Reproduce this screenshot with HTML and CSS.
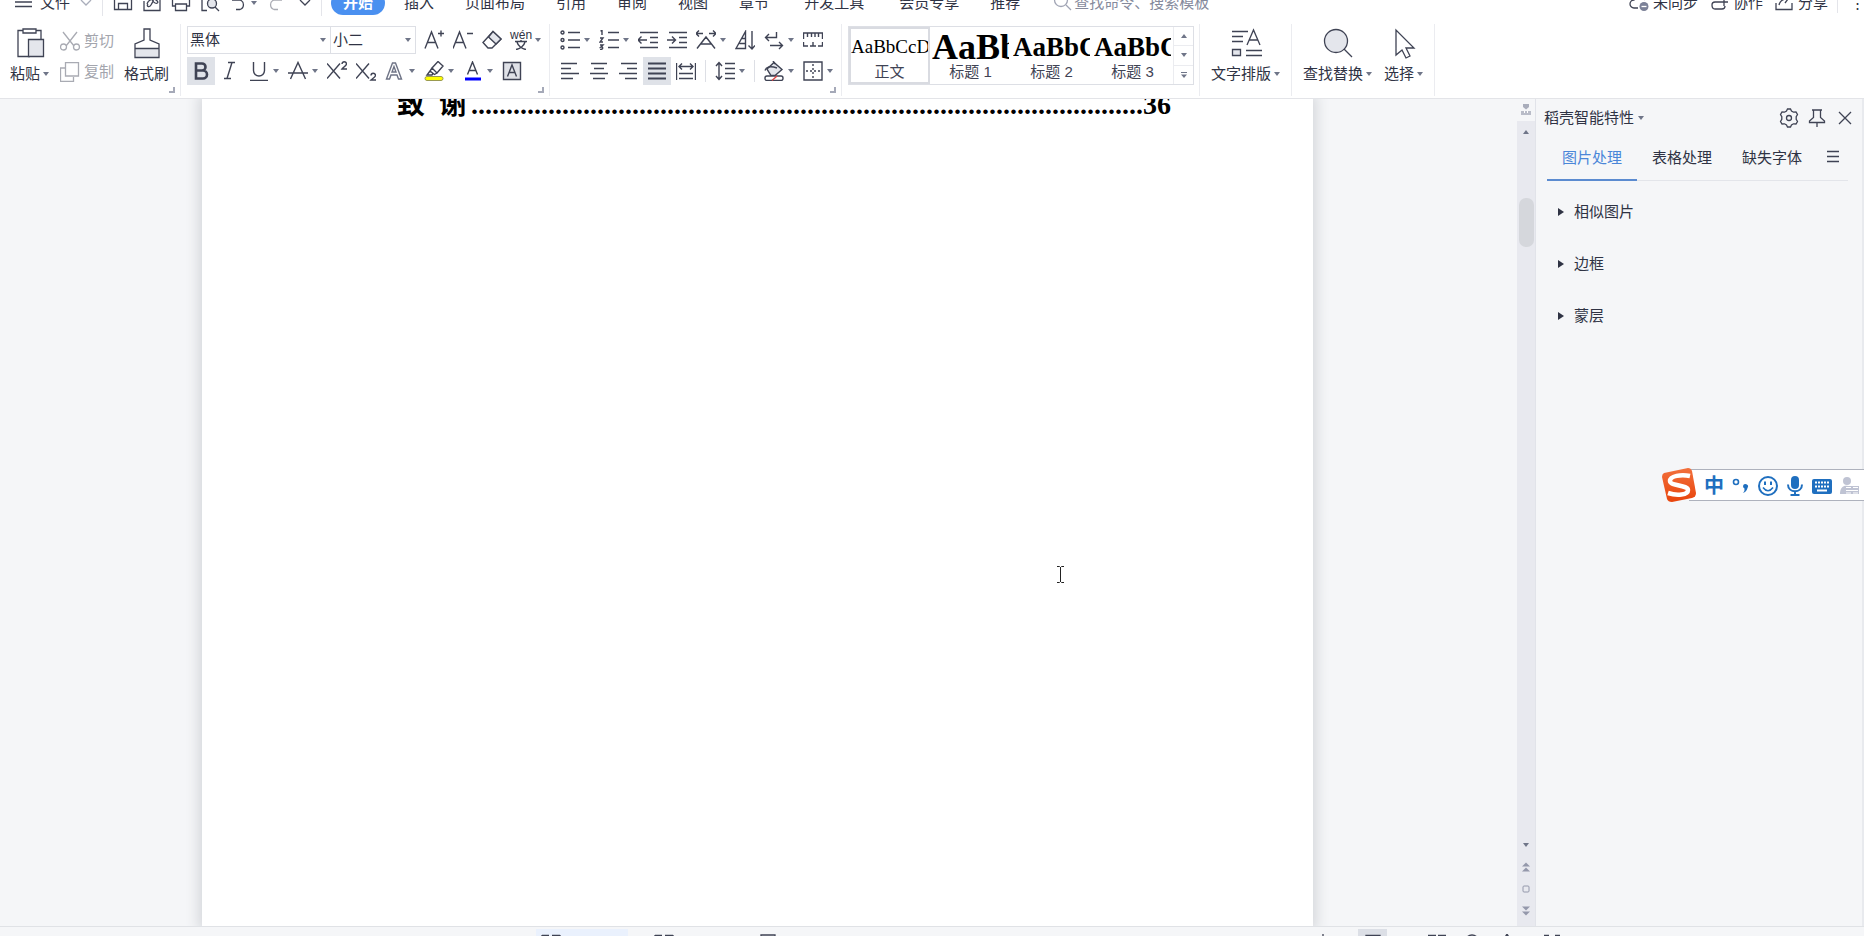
FILE: index.html
```html
<!DOCTYPE html>
<html lang="zh-CN">
<head>
    <meta charset="UTF-8">
    <meta name="viewport" content="width=device-width, initial-scale=1.0">
    <title>文字文稿</title>
    <link rel="stylesheet" href="styles.css">
</head>
<body>

    <!-- Shared glyphs -->
    <svg class="sprite" aria-hidden="true">
        <symbol id="caret" viewBox="0 0 6 4"><path d="M0 0h6L3 4z" fill="#6f7588"/></symbol>
        <symbol id="corner" viewBox="0 0 6 6"><path d="M5 0v5H0" fill="none" stroke="#a5a9b8" stroke-width="2"/></symbol>
        <symbol id="chevron" viewBox="0 0 12 8"><path d="M1 1l5 5 5-5" fill="none" stroke="currentColor" stroke-width="1.3"/></symbol>
    </svg>

    <div class="app">

        <!-- Menu bar -->
        <header class="menubar">
            <div class="menu-file">
                <button class="file-button">
                    <svg class="icon" viewBox="0 0 20 20"><path d="M1 5h17M1 9h17M1 13.500h17"/></svg>
                    <span>文件</span>
                    <svg class="chevron light"><use href="#chevron"/></svg>
                </button>
            </div>
            <div class="quick-tools">
                <button aria-label="保存"><svg class="icon" viewBox="0 0 20 20"><path d="M1.500 2h17v14.500h-17zM5.500 16.500v-6h9v6"/></svg></button>
                <button aria-label="输出为PDF"><svg class="icon" viewBox="0 0 20 20"><path d="M2 8v9.500h16V4M6 11c-2 2 1 4 3 1s4-9 2-9-1 6 2 7 4-1 1-3-8 0-9 4"/></svg></button>
                <button aria-label="打印"><svg class="icon" viewBox="0 0 20 20"><path d="M4 13H1.500V6h17v7H16M4.500 11h11v6.500h-11z"/></svg></button>
                <button aria-label="打印预览"><svg class="icon" viewBox="0 0 20 20"><path d="M7 17.500H2V2h14v5"/><circle cx="12" cy="10.500" r="4.500" fill="#e4e6ec"/><path d="M15 14l4 4"/></svg></button>
                <button aria-label="撤销" class="undo"><svg class="icon" viewBox="0 0 20 20"><path d="M3 7h8a5 5 0 0 1 0 9.500H7"/></svg><svg class="caret"><use href="#caret"/></svg></button>
                <button aria-label="恢复" class="disabled"><svg class="icon" viewBox="0 0 20 20"><path d="M16 7H8a5 5 0 0 0 0 9.500h4"/></svg></button>
                <button aria-label="自定义"><svg class="chevron"><use href="#chevron"/></svg></button>
            </div>
            <nav class="tabs">
                <button class="tab active">开始</button>
                <button class="tab">插入</button>
                <button class="tab">页面布局</button>
                <button class="tab">引用</button>
                <button class="tab">审阅</button>
                <button class="tab">视图</button>
                <button class="tab">章节</button>
                <button class="tab wide">开发工具</button>
                <button class="tab">会员专享</button>
                <button class="tab">推荐</button>
            </nav>
            <label class="search">
                <svg class="icon" viewBox="0 0 20 20"><circle cx="8" cy="7" r="6.500"/><path d="M13 12l5 5"/></svg>
                <input type="text" placeholder="查找命令、搜索模板" aria-label="查找命令、搜索模板">
            </label>
            <div class="account">
                <button><svg class="icon" viewBox="0 0 20 20"><path d="M9 15H5a4 4 0 0 1 0-8 6 6 0 0 1 11 0"/><circle cx="15" cy="13.500" r="4.500" fill="#7b8197" stroke="none"/><path d="M12.500 13.500h5" stroke="#fff"/></svg>未同步</button>
                <button><svg class="icon" viewBox="0 0 20 20"><path d="M12 9H6a3 3 0 0 0-3 3c0 2.500 1 4 3 4h7a3 3 0 0 0 3-3M15 5v8M12 9h7"/></svg>协作</button>
                <button><svg class="icon" viewBox="0 0 20 20"><path d="M2 10v6.500h16V10M5 12c1-4 4-6 8-6M10 3l4 3-3 4"/></svg>分享</button>
            </div>
            <button class="more" aria-label="更多">⋮</button>
        </header>

        <!-- Ribbon -->
        <section class="ribbon">
            <div class="group clipboard">
                <button class="big-button">
                    <svg class="big-icon" viewBox="0 0 32 32"><path d="M9 3.500H4v26h12M22 3.500h5V12M9 2h13v4H9z"/><path d="M14.500 12.500h15v17h-15z" fill="#e4e6ec"/></svg>
                    <span>粘贴<svg class="caret"><use href="#caret"/></svg></span>
                </button>
                <div class="stack">
                    <button class="disabled"><svg class="icon" viewBox="0 0 20 20"><path d="M3 1l11 14M17 1L6 15"/><circle cx="3.500" cy="16" r="3"/><circle cx="16.500" cy="16" r="3"/></svg>剪切</button>
                    <button class="disabled"><svg class="icon" viewBox="0 0 20 20"><path d="M5 6H.500v13.500h13V15"/><path d="M5.500.500h13V14h-13z"/></svg>复制</button>
                </div>
                <button class="big-button">
                    <svg class="big-icon" viewBox="0 0 32 32"><path d="M5 22h22v8H5z" fill="#e4e6ec" stroke="none"/><path d="M13 2h6v11l9 4v13.500H4V17l9-4zM4 21.500h24"/></svg>
                    <span>格式刷</span>
                </button>
                <svg class="corner"><use href="#corner"/></svg>
            </div>

            <div class="group">
                <div class="rows">
                    <div class="row">
                        <div class="picker font-name">
                            <select aria-label="字体"><option>黑体</option><option>宋体</option></select>
                            <svg class="caret"><use href="#caret"/></svg>
                        </div>
                        <div class="picker font-size">
                            <select aria-label="字号"><option>小二</option><option>三号</option></select>
                            <svg class="caret"><use href="#caret"/></svg>
                        </div>
                        <div class="row after-pickers">
                            <button class="tool" aria-label="增大字号"><svg class="icon" viewBox="0 0 20 20"><path d="M1 18.500L7.500 2 14 18.500M3.500 12.500h8M14 3.500h6M17 .500v6"/></svg></button>
                            <button class="tool" aria-label="减小字号"><svg class="icon" viewBox="0 0 20 20"><path d="M0 18.500L6.500 2 13 18.500M2.500 12.500h8M14 3.500h6"/></svg></button>
                            <button class="tool" aria-label="清除格式"><svg class="icon" viewBox="0 0 20 20"><path d="M1 12.500L11 1.500l8 7.500-9 9H6z"/><path d="M6.500 7l7.500 7 5-5-8-7.500z" fill="#e4e6ec"/></svg></button>
                            <button class="tool" aria-label="拼音指南"><span class="pinyin"><span>wén</span><svg viewBox="0 0 20 10"><path d="M4 1.500h12M10 0v1.500M6 2c1 4 5 7 9 7.500M14 2c-1 4-5 7-9 7.500"/></svg></span><svg class="caret"><use href="#caret"/></svg></button>
                        </div>
                    </div>
                    <div class="row">
                        <button class="tool on" aria-label="加粗"><svg class="icon" viewBox="0 0 20 20"><path d="M5 2.500h6a3.500 3.500 0 0 1 0 7H5zM5 9.500h7a4 4 0 0 1 0 8H5z" stroke-width="2.600"/></svg></button>
                        <button class="tool" aria-label="倾斜"><svg class="icon" viewBox="0 0 20 20"><path d="M8 1.500h7M4 17.500h7M12 1.500L7 17.500"/></svg></button>
                        <button class="tool" aria-label="下划线"><svg class="icon" viewBox="0 0 20 20"><path d="M4.500 1v8.500a5.500 5.500 0 0 0 11 0V1M1 19.500h18"/></svg><svg class="caret"><use href="#caret"/></svg></button>
                        <button class="tool" aria-label="删除线"><svg class="icon" viewBox="0 0 20 20"><path d="M2.500 18L10 1.500 17.500 18M0 12h20"/></svg><svg class="caret"><use href="#caret"/></svg></button>
                        <button class="tool" aria-label="上标"><svg class="icon" viewBox="0 0 20 20"><path d="M0 2.500l13 15M13 2.500l-13 15M15 3c0-3 4.500-3 4.500 0 0 1.500-3 3-4.500 5h5"/></svg></button>
                        <button class="tool" aria-label="下标"><svg class="icon" viewBox="0 0 20 20"><path d="M0 2.500l13 15M13 2.500l-13 15M15 14.500c0-3 4.500-3 4.500 0 0 1.500-3 3-4.500 4.500h5"/></svg></button>
                        <button class="tool" aria-label="文字效果"><svg class="icon" viewBox="0 0 20 20"><path d="M1.500 18L7.500 2h3l6 16h-3l-1.500-4H6l-1.500 4zM7 11h4L9 5.500z" stroke="#6f7486"/></svg><svg class="caret"><use href="#caret"/></svg></button>
                        <button class="tool" aria-label="突出显示"><svg class="icon" viewBox="0 0 20 20"><path d="M8 7l6-6.500 5 4.500-6 7zM8 7l-2 3 4.500 3.500L13 12M6 10l-3 4h5l1-1.500"/><rect x="1" y="15.500" width="18" height="4" rx="2" fill="#ff0" stroke="#9a9a50" stroke-width="1"/></svg><svg class="caret"><use href="#caret"/></svg></button>
                        <button class="tool" aria-label="字体颜色"><svg class="icon" viewBox="0 0 20 20"><path d="M4.500 13.500L9.500 1l5 12.500M6 9.500h7"/><path d="M2 18h16" stroke="#00f" stroke-width="3"/></svg><svg class="caret"><use href="#caret"/></svg></button>
                        <button class="tool" aria-label="字符底纹"><svg class="icon" viewBox="0 0 20 20"><path d="M1.500 1.500h17v17h-17z" fill="#dfe1e7"/><path d="M5.500 15.500L10 4l4.500 11.500M7 11.500h6"/></svg></button>
                    </div>
                </div>
                <svg class="corner"><use href="#corner"/></svg>
            </div>

            <div class="group">
                <div class="rows">
                    <div class="row">
                        <button class="tool" aria-label="项目符号"><svg class="icon" viewBox="0 0 20 20"><circle cx="2.500" cy="2.500" r="1.500"/><circle cx="2.500" cy="10" r="1.500"/><circle cx="2.500" cy="17.500" r="1.500"/><path d="M8 2.500h12M8 10h12M8 17.500h12"/></svg><svg class="caret"><use href="#caret"/></svg></button>
                        <button class="tool" aria-label="编号"><svg class="icon" viewBox="0 0 20 20"><path d="M1.500 1L3 .500V5M1 8h3l-3 4h3M1 15h3l-2 2c2-.500 3 2.500-1 2.500M9 2.500h11M9 10h11M9 17.500h11"/></svg><svg class="caret"><use href="#caret"/></svg></button>
                        <button class="tool" aria-label="减少缩进"><svg class="icon" viewBox="0 0 20 20"><path d="M2 2.500h18M12 7.500h8M12 12.500h8M2 17.500h18M0 10h9M3.500 6.500L0 10l3.500 3.500"/></svg></button>
                        <button class="tool" aria-label="增加缩进"><svg class="icon" viewBox="0 0 20 20"><path d="M2 2.500h18M12 7.500h8M12 12.500h8M2 17.500h18M0 10h8M5 6.500L8.500 10 5 13.500"/></svg></button>
                        <button class="tool" aria-label="中文版式"><svg class="icon" viewBox="0 0 20 20"><path d="M1 18.500L10 7l9 11.500M5 14h10M7 3.500H0M3 .500l-3 3 3 3M13 3.500h7M17 .500l3 3-3 3"/></svg><svg class="caret"><use href="#caret"/></svg></button>
                        <button class="tool" aria-label="排序"><svg class="icon" viewBox="0 0 20 20"><path d="M1 18.500L10.500 1.500v17zM7 8.500h3.500M4.500 13.500h6M17 1v18M13.500 15.500L17 19l3-3.500"/></svg></button>
                        <button class="tool" aria-label="换行"><svg class="icon" viewBox="0 0 20 20"><path d="M12.500 2v5.500H2M5 4L1.500 7.500 5 11M6 15.500h12M15 12l3.500 3.500L15 19"/></svg><svg class="caret"><use href="#caret"/></svg></button>
                        <button class="tool" aria-label="标尺"><svg class="icon" viewBox="0 0 20 20"><path d="M.500 9V3h19v6M4.500 3v4M8.500 3v4M12 3v4M15.500 3v4M.500 12v4H5M19.500 12v4H15M7 16h6M10 12v4"/></svg></button>
                    </div>
                    <div class="row">
                        <button class="tool" aria-label="左对齐"><svg class="icon" viewBox="0 0 20 20"><path d="M1 2.500h16M1 7.500h10M1 12.500h18M1 17.500h12"/></svg></button>
                        <button class="tool" aria-label="居中"><svg class="icon" viewBox="0 0 20 20"><path d="M2 2.500h16M5 7.500h10M1 12.500h18M4 17.500h12"/></svg></button>
                        <button class="tool" aria-label="右对齐"><svg class="icon" viewBox="0 0 20 20"><path d="M3 2.500h16M9 7.500h10M1 12.500h18M7 17.500h12"/></svg></button>
                        <button class="tool on" aria-label="两端对齐"><svg class="icon" viewBox="0 0 20 20"><path d="M1 2.500h18M1 7.500h18M1 12.500h18M1 17.500h18" stroke-width="1.800"/></svg></button>
                        <button class="tool" aria-label="分散对齐"><svg class="icon" viewBox="0 0 20 20"><path d="M.500 2v17M19.500 2v17M3 12.500h14M3 17.500h14M3 5.500h14M6 2.500l-3 3 3 3M14 2.500l3 3-3 3"/></svg></button>
                        <span class="split"></span>
                        <button class="tool" aria-label="行距"><svg class="icon" viewBox="0 0 20 20"><path d="M4 1.500v17M1 5l3-3.500L7 5M1 15l3 3.500L7 15M10 2.500h10M10 7.500h10M10 12.500h10M10 17.500h10"/></svg><svg class="caret"><use href="#caret"/></svg></button>
                        <span class="split"></span>
                        <button class="tool" aria-label="底纹颜色"><svg class="icon" viewBox="0 0 20 20"><path d="M3 8l7-6.500 8 7-7 6H7z" fill="#e4e6ec"/><path d="M1 9.500C2 6 6 4.500 13 7M9 0l2 3"/><rect x="1" y="15" width="18" height="4.500" rx="2" fill="#fff"/><path d="M8 19.500l5-4.500" stroke="#d44"/></svg><svg class="caret"><use href="#caret"/></svg></button>
                        <button class="tool" aria-label="边框"><svg class="icon" viewBox="0 0 20 20"><path d="M1 1h18v18H1z"/><path d="M10 3v14M3 10h14" stroke-dasharray="2 2"/></svg><svg class="caret"><use href="#caret"/></svg></button>
                    </div>
                </div>
                <svg class="corner"><use href="#corner"/></svg>
            </div>

            <div class="group styles">
                <div class="gallery">
                    <button class="style selected"><span class="sample">AaBbCcDd</span><span class="name">正文</span></button>
                    <button class="style"><span class="sample h1">AaBb</span><span class="name">标题 1</span></button>
                    <button class="style"><span class="sample h2">AaBbCc</span><span class="name">标题 2</span></button>
                    <button class="style"><span class="sample h2">AaBbCc</span><span class="name">标题 3</span></button>
                    <div class="gallery-scroll">
                        <button aria-label="上一行"><svg class="caret up"><use href="#caret"/></svg></button>
                        <button aria-label="下一行"><svg class="caret"><use href="#caret"/></svg></button>
                        <button aria-label="全部样式"><svg class="expand" viewBox="0 0 6 6"><path d="M0 0h6v1H0zM0 2.500h6L3 6z" fill="#6f7588"/></svg></button>
                    </div>
                </div>
            </div>

            <div class="group edit">
                <button class="big-button">
                    <svg class="big-icon" viewBox="0 0 32 32"><path d="M2 4.500h16M2 9.500h11M2 14.500h11M17 18L23.500 3 30 18M19 13h9M16 23.500h16M16 28.500h16"/><path d="M2.500 22.500h8v6h-8z" fill="#e4e6ec"/></svg>
                    <span>文字排版<svg class="caret"><use href="#caret"/></svg></span>
                </button>
            </div>
            <div class="group edit">
                <button class="big-button">
                    <svg class="big-icon" viewBox="0 0 32 32"><circle cx="14" cy="14" r="11.500" fill="#e4e6ec"/><path d="M22 22l8 8"/></svg>
                    <span>查找替换<svg class="caret"><use href="#caret"/></svg></span>
                </button>
                <button class="big-button">
                    <svg class="big-icon" viewBox="0 0 32 32"><path d="M8 3v25l6-5 4 8 4-2-4-8h8z"/></svg>
                    <span>选择<svg class="caret"><use href="#caret"/></svg></span>
                </button>
            </div>
        </section>

        <!-- Document and side panel -->
        <main class="workspace">
            <div class="document">
                <article class="page">
                    <p class="toc-line"><span class="toc-title">致&nbsp; 谢</span><span class="leader">................................................................................................</span><span>36</span></p>
                </article>
                <svg class="text-cursor" viewBox="0 0 9 17"><path d="M1 .500h2.500l1 1 1-1H8M1 16.500h2.500l1-1 1 1H8M4.500 1v15" fill="none" stroke="#222"/></svg>
            </div>

            <div class="scrollbar">
                <button class="ruler-toggle" aria-label="标尺"><svg viewBox="0 0 12 12"><path d="M3 0h6v3L6 5.500 3 3z" fill="#a9adbb"/><path d="M1 7h10v4H1z" fill="#b9bcc8"/><path d="M4.500 7v2M7.500 7v2" stroke="#fff"/></svg></button>
                <div class="track">
                    <button aria-label="向上滚动"><svg class="caret up wide-caret"><use href="#caret"/></svg></button>
                    <div class="thumb"></div>
                    <div class="track-end">
                        <button aria-label="向下滚动"><svg class="caret wide-caret"><use href="#caret"/></svg></button>
                        <button aria-label="上一页"><svg class="jump" viewBox="0 0 8 10"><path d="M0 4.500h8L4 .500zM0 9.500h8L4 5.500z"/></svg></button>
                        <button aria-label="选择浏览对象"><svg class="jump" viewBox="0 0 8 10"><rect x="1" y="2" width="6" height="6" rx="1" fill="none" stroke="#9498ab"/></svg></button>
                        <button aria-label="下一页"><svg class="jump" viewBox="0 0 8 10"><path d="M0 .500h8L4 4.500zM0 5.500h8L4 9.500z"/></svg></button>
                    </div>
                </div>
            </div>

            <aside class="panel">
                <div class="panel-head">
                    <button class="panel-title">稻壳智能特性<svg class="caret"><use href="#caret"/></svg></button>
                    <div class="panel-actions">
                        <button aria-label="设置"><svg class="icon" viewBox="0 0 20 20"><path d="M7.500 3L8.500 1h3l1 2 2 1.200 2.500-.200 1.500 2.500-1.300 2.200v2.600l1.300 2.200-1.500 2.500-2.500-.200-2 1.200-1 2h-3l-1-2-2-1.200-2.500.200L1.500 13.500l1.300-2.200V8.700L1.500 6.500 3 4l2.500.200z"/><circle cx="10" cy="10" r="2.500"/></svg></button>
                        <button aria-label="固定"><svg class="icon" viewBox="0 0 20 20"><path d="M5 2h10M6.500 2v7.500L2.500 13v1.500h15V13l-4-3.500V2M10 14.500V19"/></svg></button>
                        <button aria-label="关闭"><svg class="icon" viewBox="0 0 20 20"><path d="M4 4l12 12M16 4L4 16"/></svg></button>
                    </div>
                </div>
                <div class="panel-tabs">
                    <button class="panel-tab active">图片处理</button>
                    <button class="panel-tab">表格处理</button>
                    <button class="panel-tab">缺失字体</button>
                    <button class="panel-menu" aria-label="菜单"><svg class="icon" viewBox="0 0 20 20"><path d="M4 4.500h12M4 9.500h12M4 14.500h12"/></svg></button>
                </div>
                <ul class="sections">
                    <li><button><svg class="arrow" viewBox="0 0 6 8"><path d="M0 0l6 4-6 4z"/></svg>相似图片</button></li>
                    <li><button><svg class="arrow" viewBox="0 0 6 8"><path d="M0 0l6 4-6 4z"/></svg>边框</button></li>
                    <li><button><svg class="arrow" viewBox="0 0 6 8"><path d="M0 0l6 4-6 4z"/></svg>蒙层</button></li>
                </ul>
            </aside>
        </main>

        <!-- Status bar -->
        <footer class="statusbar">
            <div class="views">
                <button class="view" aria-label="页面"><svg class="icon" viewBox="0 0 20 20"><path d="M1 1.500h7M11 1.500h8M1 1v14h18V1"/></svg></button>
                <button class="view-icon" aria-label="大纲"><svg class="icon" viewBox="0 0 20 20"><path d="M1 1.500h7M11 1.500h8M1 1v14h18V1"/></svg></button>
                <button class="view-icon" aria-label="校对"><svg class="icon" viewBox="0 0 20 20"><path d="M3 1h14v14H3z"/></svg></button>
            </div>
            <div class="zoom">
                <button aria-label="放大"><svg class="icon" viewBox="0 0 20 20"><path d="M10 0v14M3 7h14"/></svg></button>
                <button class="current" aria-label="页面视图"><svg class="icon" viewBox="0 0 20 20"><path d="M3 1.500h14v14H3z"/></svg></button>
                <span class="zoom-gap"></span>
                <button aria-label="阅读版式"><svg class="icon" viewBox="0 0 20 20"><path d="M1 1.500h8M11 1.500h8"/></svg></button>
                <button aria-label="Web版式"><svg class="icon" viewBox="0 0 20 20"><circle cx="10" cy="8" r="7"/></svg></button>
                <button aria-label="写作模式"><svg class="icon" viewBox="0 0 20 20"><path d="M10 0l3 5v10H7V5z"/></svg></button>
                <button class="eye" aria-label="护眼模式"><svg class="icon" viewBox="0 0 20 20"><path d="M2 1.500h5M13 1.500h5"/></svg></button>
            </div>
        </footer>
    </div>

    <!-- Input method bar -->
    <div class="ime">
        <svg class="ime-logo" viewBox="0 0 36 36">
            <defs><linearGradient id="ime-orange" x1="0" y1="0" x2="0" y2="1"><stop offset="0" stop-color="#f2703c"/><stop offset="1" stop-color="#e8440c"/></linearGradient></defs>
            <path d="M3 6L27 1q3 0 4 3l4 22q0 4-4 5L11 35q-4 0-5-3L1 10q0-3 2-4z" fill="url(#ime-orange)"/>
            <path d="M29 9C20 7 9 9 9 14s18 4 18 9-11 6-20 3" fill="none" stroke="#fff" stroke-width="4.500"/>
        </svg>
        <div class="ime-bar">
            <button>中</button>
            <button aria-label="中文标点"><svg viewBox="0 0 20 20"><circle cx="5" cy="6" r="2.500" fill="none" stroke="#1f6fbf" stroke-width="1.600"/><path d="M12 10a2.500 2.500 0 1 1 4.500 2q-1 4-4.500 5 2-2 1.500-4.500a2.500 2.500 0 0 1-1.500-2.500z"/></svg></button>
            <button aria-label="表情"><svg viewBox="0 0 20 20"><circle cx="10" cy="10" r="9" fill="none" stroke="#1f6fbf" stroke-width="2"/><path d="M6 5.500h2v3.500H6zM12 5.500h2v3.500h-2z"/><path d="M5 11.500q5 6.500 10 0" fill="none" stroke="#1f6fbf" stroke-width="1.600"/></svg></button>
            <button aria-label="语音"><svg viewBox="0 0 20 20"><rect x="6" y="0" width="8" height="13" rx="4"/><path d="M3 8.500c0 9 14 9 14 0M10 15v4M5.500 19h9" fill="none" stroke="#1f6fbf" stroke-width="2"/></svg></button>
            <button aria-label="软键盘"><svg viewBox="0 0 20 20"><rect x="0" y="3" width="20" height="15" rx="2"/><path d="M3 6.500h14M3 10.500h14" stroke="#fff" stroke-width="2" stroke-dasharray="2 1"/><path d="M5 14.500h10" stroke="#fff" stroke-width="2"/></svg></button>
            <button aria-label="登录"><svg class="ime-user" viewBox="0 0 20 20"><circle cx="8" cy="5" r="4"/><path d="M1 18c0-7 4-9 8-8h11v8z"/><path d="M7 11.500h5M7 14.500h12M14 11.500h5M7 17h5M14 17h5" stroke="#fff"/></svg></button>
        </div>
    </div>

</body>
</html>
```
FILE: styles.css
```css
* {
    box-sizing: border-box;
}

body {
    margin: 0;
    overflow: hidden;
    font-family: "Liberation Sans", "Noto Sans CJK SC", sans-serif;
    font-size: 15px;
    line-height: 20px;
    color: #2f3344;
    background: #f5f6f8;
}

button,
input,
select {
    font: inherit;
    color: inherit;
    background: none;
    border: none;
    padding: 0;
    margin: 0;
}

button {
    display: flex;
    align-items: center;
    justify-content: center;
    white-space: nowrap;
}

svg {
    display: block;
    flex: none;
}

.sprite {
    display: none;
}

.app {
    display: flex;
    flex-direction: column;
    height: 100vh;
}

.icon {
    width: 20px;
    height: 20px;
    fill: none;
    stroke: #3f4354;
    stroke-width: 1.3;
}

.caret {
    width: 6px;
    height: 4px;
}

.caret.up {
    transform: rotate(180deg);
}

.chevron {
    width: 12px;
    height: 8px;
    color: #3f4354;
}

.chevron.light {
    color: #a9adba;
}

.corner {
    width: 6px;
    height: 6px;
    align-self: flex-end;
    margin: 0 0 3px -7px;
}

.disabled {
    color: #a3a5ad;
}

.disabled .icon {
    stroke: #a9abb3;
}

/* Menu bar, partly scrolled off the top */
.menubar {
    display: flex;
    align-items: center;
    flex: none;
    height: 42px;
    margin-top: -18px;
    background: #fff;
}

.menu-file,
.quick-tools {
    display: flex;
    align-items: center;
    height: 26px;
    border-right: 1px solid #e4e5ea;
}

.menu-file {
    padding: 0 10px 0 14px;
}

.file-button {
    gap: 6px;
}

.file-button .chevron {
    margin-left: 4px;
}

.quick-tools {
    gap: 9px;
    padding: 0 10px;
}

.undo {
    gap: 2px;
}

.quick-tools .chevron {
    margin-left: 4px;
}

.tabs {
    display: flex;
    padding-left: 9px;
}

.tab {
    height: 24px;
    margin-left: 31px;
}

.tab.wide {
    margin: 0 4px 0 35px;
}

.tab.active {
    margin: 0 -12px 0 0;
    padding: 0 12px;
    border-radius: 12px;
    background: #4a90f0;
    color: #fff;
    font-weight: bold;
}

.tab.active + .tab {
    margin-left: 31px;
}

.search {
    display: flex;
    align-items: center;
    flex: 1;
    gap: 1px;
    padding-left: 33px;
}

.search .icon {
    stroke: #a0a4b4;
}

.search input {
    width: 160px;
    outline: none;
}

.search input::placeholder {
    color: #858a9c;
    opacity: 1;
}

.account {
    display: flex;
    gap: 11px;
    padding-right: 9px;
    border-right: 1px solid #e4e5ea;
}

.account button {
    gap: 4px;
}

.more {
    width: 26px;
    padding-left: 12px;
}

/* Ribbon */
.ribbon {
    display: flex;
    flex: none;
    height: 75px;
    background: #fff;
    border-bottom: 1px solid #e3e4e8;
}

.group {
    display: flex;
    height: 72px;
    padding: 2px 5px 0 6px;
    border-right: 1px solid #ebecf0;
}

.clipboard {
    padding-left: 10px;
}

.clipboard .corner {
    margin-left: 0;
}

.big-button {
    flex-direction: column;
    justify-content: flex-start;
    gap: 5px;
    padding-top: 1px;
}

.big-button span {
    display: flex;
    align-items: center;
    gap: 3px;
}

.big-icon {
    width: 32px;
    height: 32px;
    fill: none;
    stroke: #3f4354;
    stroke-width: 1.3;
}

.stack {
    display: flex;
    flex-direction: column;
    gap: 11px;
    padding: 5px 10px 0 11px;
}

.stack button {
    gap: 4px;
}

.rows {
    display: flex;
    flex-direction: column;
    gap: 3px;
}

.row {
    display: flex;
    gap: 1px;
}

.after-pickers {
    padding-left: 3px;
}

.tool {
    gap: 4px;
    height: 28px;
    padding: 0 4px;
}

.tool.on {
    background: #dfe2e8;
}

.tool .icon {
    stroke-width: 1.4;
}

.pinyin {
    display: flex;
    flex-direction: column;
    align-items: center;
    width: 20px;
    font-size: 12px;
    line-height: 10px;
}

.pinyin svg {
    width: 20px;
    height: 10px;
    fill: none;
    stroke: #3f4354;
    stroke-width: 1.4;
}

.picker {
    display: grid;
    align-items: center;
    height: 28px;
    border: 1px solid #dddfe5;
}

.picker select {
    grid-area: 1 / 1;
    width: 100%;
    height: 26px;
    padding-left: 2px;
    appearance: none;
}

.picker .caret {
    grid-area: 1 / 1;
    justify-self: end;
    margin-right: 4px;
    pointer-events: none;
}

.font-name {
    width: 144px;
}

.font-size {
    width: 86px;
    margin-left: -2px;
}

.split {
    width: 1px;
    height: 22px;
    margin: 3px 4px 0;
    background: #dddfe5;
}

.gallery {
    display: flex;
    height: 59px;
    border: 1px solid #dddfe5;
}

.style {
    flex-direction: column;
    align-items: stretch;
    justify-content: flex-start;
    width: 81px;
    height: 57px;
    border: 2px solid transparent;
    color: #000;
}

.style.selected {
    border-color: #d9dbe1;
}

.sample {
    height: 34px;
    overflow: hidden;
    font-family: "Liberation Serif", serif;
    font-size: 19px;
    line-height: 36px;
    text-align: left;
}

.sample.h1 {
    font-size: 36px;
    font-weight: bold;
}

.sample.h2 {
    font-size: 27px;
    font-weight: bold;
}

.name {
    color: #3f4354;
}

.gallery-scroll {
    display: flex;
    flex-direction: column;
    width: 20px;
    border-left: 1px solid #ebecf0;
}

.gallery-scroll button {
    flex: 1;
    border-bottom: 1px solid #ebecf0;
}

.gallery-scroll button:last-child {
    border-bottom: none;
}

.expand {
    width: 6px;
    height: 6px;
}

.edit {
    gap: 12px;
    padding: 2px 11px 0;
}

/* Workspace */
.workspace {
    display: flex;
    flex: 1;
    min-height: 0;
}

.document {
    display: flex;
    flex: 1;
    justify-content: center;
    position: relative;
    overflow: hidden;
    padding-right: 2px;
}

.page {
    width: 1111px;
    background: #fff;
    box-shadow: 0 0 12px 4px #d6d8dc;
}

.toc-line {
    display: flex;
    margin: -11px 0 0;
    padding: 0 142px 0 195px;
    font-family: "Liberation Serif", "Noto Sans CJK SC", serif;
    font-size: 28px;
    font-weight: bold;
    line-height: 34px;
    color: #000;
}

.toc-title {
    white-space: nowrap;
}

.leader {
    flex: 1;
    overflow: hidden;
    text-align: right;
    white-space: nowrap;
}

.text-cursor {
    position: absolute;
    top: 467px;
    left: 1056px;
    width: 9px;
    height: 17px;
}

.scrollbar {
    display: flex;
    flex-direction: column;
    width: 18px;
}

.ruler-toggle {
    height: 22px;
}

.ruler-toggle svg {
    width: 12px;
    height: 12px;
}

.track {
    display: flex;
    flex: 1;
    flex-direction: column;
    background: #e8e9ef;
}

.track button {
    width: 18px;
    height: 22px;
}

.wide-caret {
    width: 8px;
}

.thumb {
    width: 15px;
    height: 49px;
    margin: 55px auto 0;
    border-radius: 7px;
    background: #d5d7dc;
}

.track-end {
    margin-top: auto;
    padding-bottom: 4px;
}

.jump {
    width: 8px;
    height: 10px;
    fill: #9498ab;
}

/* Side panel */
.panel {
    width: 329px;
    padding: 3px 14px 0 8px;
    border-left: 1px solid #e1e3e9;
    border-right: 2px solid #e8eaee;
    background: #f5f6f8;
}

.panel-head,
.panel-title,
.panel-actions {
    display: flex;
    align-items: center;
}

.panel-head {
    justify-content: space-between;
    height: 32px;
}

.panel-title {
    gap: 4px;
}

.panel-actions {
    gap: 8px;
    margin-right: -7px;
}

.panel-tabs {
    display: flex;
    height: 47px;
    margin-left: 3px;
    border-bottom: 1px solid #e3e5ea;
}

.panel-tab {
    width: 90px;
    height: 47px;
    padding-top: 2px;
    border-bottom: 2px solid transparent;
}

.panel-tab.active {
    border-color: #5b8bd0;
    color: #4a86d8;
}

.panel-menu {
    flex: 1;
}

.sections {
    margin: 0;
    padding: 5px 0 0 14px;
    list-style: none;
}

.sections button {
    gap: 10px;
    height: 52px;
}

.arrow {
    width: 6px;
    height: 8px;
    fill: #2f3344;
}

/* Status bar, partly below the window */
.statusbar {
    display: flex;
    flex: none;
    justify-content: space-between;
    height: 30px;
    margin-bottom: -20px;
    padding: 2px 298px 0 536px;
    border-top: 1px solid #e0e2e6;
    background: #f5f6f8;
}

.views,
.zoom {
    display: flex;
    gap: 6px;
}

.statusbar button {
    width: 29px;
    align-items: flex-start;
    padding-top: 5px;
}

.views .view {
    width: 92px;
    justify-content: flex-start;
    padding-left: 5px;
    background: #eaf1fd;
}

.views .view-icon {
    width: 98px;
    justify-content: flex-start;
    padding-left: 20px;
}

.zoom .current {
    margin-left: 15px;
    background: #dcdfe6;
}

.zoom .eye {
    margin-left: 10px;
}

.zoom-gap {
    width: 23px;
}

/* Floating input method bar */
.ime {
    display: flex;
    align-items: center;
    position: fixed;
    top: 467px;
    right: 0;
}

.ime-logo {
    z-index: 1;
    width: 36px;
    height: 36px;
    margin-right: -8px;
}

.ime-bar {
    display: flex;
    align-items: center;
    gap: 7px;
    height: 32px;
    padding: 1px 5px 0 15px;
    border: 1px solid #aeb2bd;
    border-width: 1px 0;
    background: #fff;
}

.ime-bar button {
    width: 20px;
    height: 20px;
    color: #1f6fbf;
    font-size: 20px;
    font-weight: bold;
}

.ime-bar svg {
    width: 20px;
    height: 20px;
    fill: #1f6fbf;
}

.ime-bar .ime-user {
    fill: #bfc3d3;
}
```
